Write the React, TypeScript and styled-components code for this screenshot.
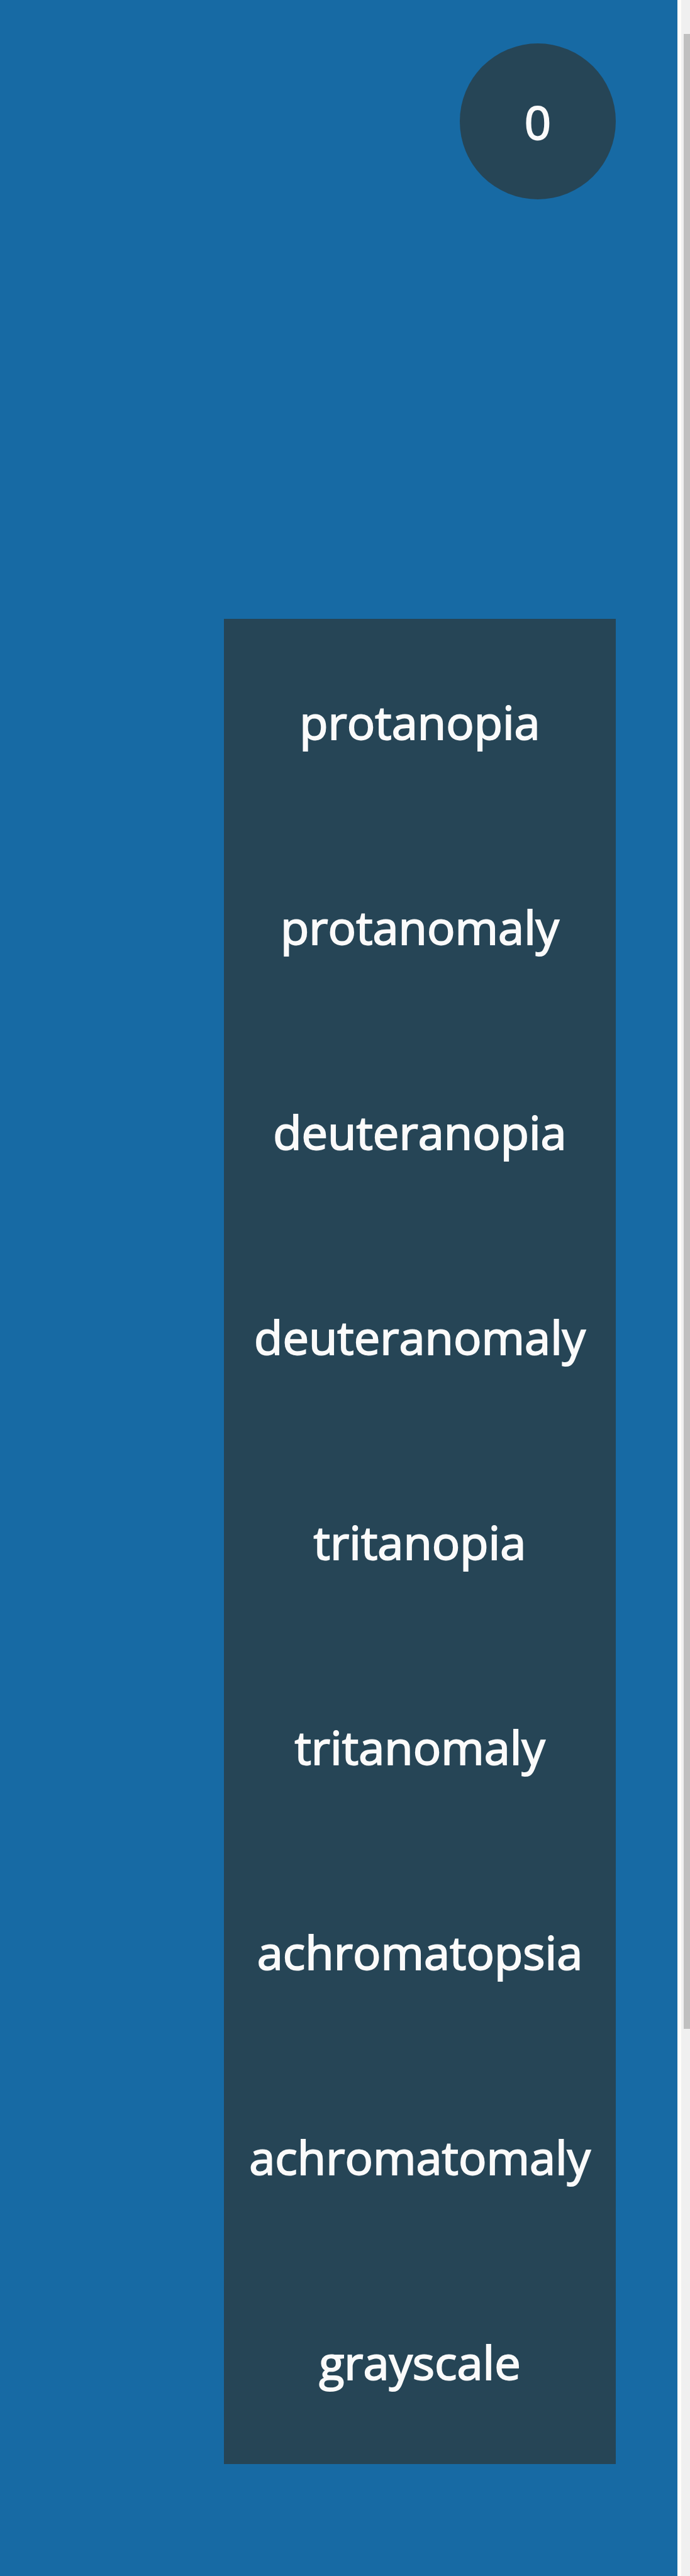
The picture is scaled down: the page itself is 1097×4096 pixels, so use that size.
import React, { useState } from "react";
import styled, { createGlobalStyle } from "styled-components";

const GlobalStyle = createGlobalStyle`
  * { box-sizing: border-box; }
  body { margin: 0; background: #176aa4; }
`;

const Page = styled.div`
  display: flex;
  min-height: 100vh;
  font-family: "Open Sans", "Noto Sans", sans-serif;
`;

const Main = styled.main`
  flex: 1;
  display: flex;
  flex-direction: column;
  align-items: flex-end;
  gap: 667px;
  padding: 69px 98px 178px;
  background: #176aa4;
`;

const BaseButton = styled.button`
  display: flex;
  align-items: center;
  justify-content: center;
  padding: 2px 0 0;
  border: 0;
  background: #264556;
  color: #fafafa;
  font-family: inherit;
  font-size: 74px;
  font-weight: 400;
  line-height: 104px;
  -webkit-text-stroke: 2px #fafafa;
  cursor: pointer;
`;

const Counter = styled(BaseButton)`
  width: 248px;
  height: 248px;
  border-radius: 50%;
`;

const Menu = styled.ul`
  display: flex;
  flex-direction: column;
  width: 623px;
  margin: 0;
  padding: 0;
  list-style: none;
  background: #264556;
`;

const MenuButton = styled(BaseButton)`
  width: 100%;
  height: 326px;
`;

const ScrollTrack = styled.div`
  display: grid;
  grid-template-rows: 54fr 3172fr 870fr;
  width: 20px;
  padding-left: 4px;
  border-left: 6px solid #fffdfa;
  background: #f0f0f0;
`;

const ScrollThumb = styled.div`
  grid-row: 2;
  background: #c0c0c0;
`;

const filters = [
  "protanopia",
  "protanomaly",
  "deuteranopia",
  "deuteranomaly",
  "tritanopia",
  "tritanomaly",
  "achromatopsia",
  "achromatomaly",
  "grayscale",
];

export default function App() {
  const [count, setCount] = useState(0);
  return (
    <>
      <GlobalStyle />
      <Page>
        <Main>
          <Counter type="button" onClick={() => setCount(count + 1)}>
            {count}
          </Counter>
          <Menu>
            {filters.map((name) => (
              <li key={name}>
                <MenuButton type="button">{name}</MenuButton>
              </li>
            ))}
          </Menu>
        </Main>
        <ScrollTrack aria-hidden="true">
          <ScrollThumb />
        </ScrollTrack>
      </Page>
    </>
  );
}
